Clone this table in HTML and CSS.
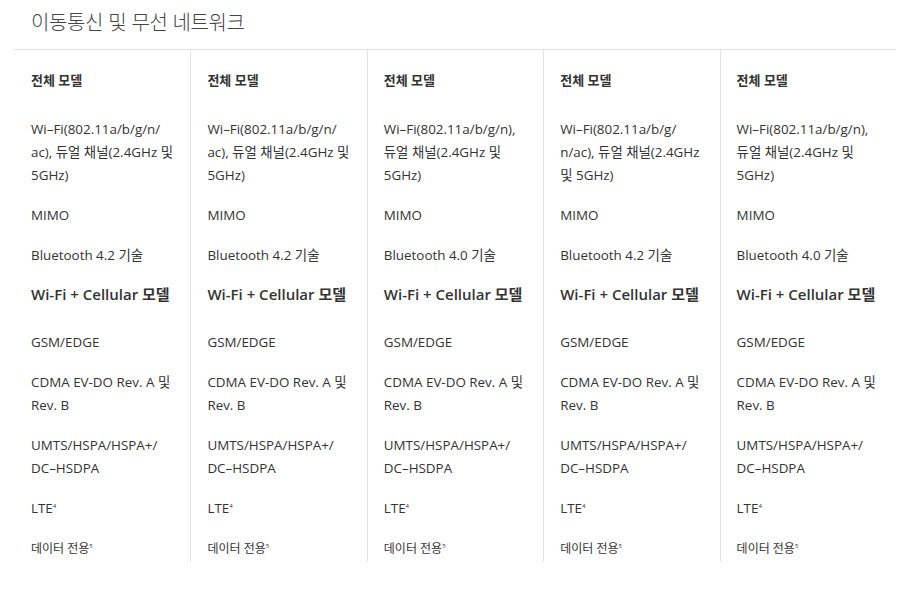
FILE: index.html
```html
<!DOCTYPE html>
<html lang="ko">
<head>
<meta charset="utf-8">
<title>이동통신 및 무선 네트워크</title>
<link rel="stylesheet" href="styles.css">
</head>
<body>
<section class="spec">
  <h2 class="spec-title">이동통신 및 무선 네트워크</h2>
  <div class="grid">
    <div class="col">
      <h3 class="model">전체 모델</h3>
      <p>Wi–Fi(802.11a/b/g/n/<br>ac), 듀얼 채널(2.4GHz 및<br>5GHz)</p>
      <p>MIMO</p>
      <p>Bluetooth 4.2 기술</p>
      <h4 class="cell">Wi-Fi + Cellular 모델</h4>
      <p>GSM/EDGE</p>
      <p>CDMA EV-DO Rev. A 및<br>Rev. B</p>
      <p>UMTS/HSPA/HSPA+/<br>DC–HSDPA</p>
      <p>LTE<sup>4</sup></p>
      <p class="small">데이터 전용<sup>5</sup></p>
    </div>
    <div class="col">
      <h3 class="model">전체 모델</h3>
      <p>Wi–Fi(802.11a/b/g/n/<br>ac), 듀얼 채널(2.4GHz 및<br>5GHz)</p>
      <p>MIMO</p>
      <p>Bluetooth 4.2 기술</p>
      <h4 class="cell">Wi-Fi + Cellular 모델</h4>
      <p>GSM/EDGE</p>
      <p>CDMA EV-DO Rev. A 및<br>Rev. B</p>
      <p>UMTS/HSPA/HSPA+/<br>DC–HSDPA</p>
      <p>LTE<sup>4</sup></p>
      <p class="small">데이터 전용<sup>5</sup></p>
    </div>
    <div class="col">
      <h3 class="model">전체 모델</h3>
      <p>Wi–Fi(802.11a/b/g/n),<br>듀얼 채널(2.4GHz 및<br>5GHz)</p>
      <p>MIMO</p>
      <p>Bluetooth 4.0 기술</p>
      <h4 class="cell">Wi-Fi + Cellular 모델</h4>
      <p>GSM/EDGE</p>
      <p>CDMA EV-DO Rev. A 및<br>Rev. B</p>
      <p>UMTS/HSPA/HSPA+/<br>DC–HSDPA</p>
      <p>LTE<sup>4</sup></p>
      <p class="small">데이터 전용<sup>5</sup></p>
    </div>
    <div class="col">
      <h3 class="model">전체 모델</h3>
      <p>Wi–Fi(802.11a/b/g/<br>n/ac), 듀얼 채널(2.4GHz<br>및 5GHz)</p>
      <p>MIMO</p>
      <p>Bluetooth 4.2 기술</p>
      <h4 class="cell">Wi-Fi + Cellular 모델</h4>
      <p>GSM/EDGE</p>
      <p>CDMA EV-DO Rev. A 및<br>Rev. B</p>
      <p>UMTS/HSPA/HSPA+/<br>DC–HSDPA</p>
      <p>LTE<sup>4</sup></p>
      <p class="small">데이터 전용<sup>5</sup></p>
    </div>
    <div class="col">
      <h3 class="model">전체 모델</h3>
      <p>Wi–Fi(802.11a/b/g/n),<br>듀얼 채널(2.4GHz 및<br>5GHz)</p>
      <p>MIMO</p>
      <p>Bluetooth 4.0 기술</p>
      <h4 class="cell">Wi-Fi + Cellular 모델</h4>
      <p>GSM/EDGE</p>
      <p>CDMA EV-DO Rev. A 및<br>Rev. B</p>
      <p>UMTS/HSPA/HSPA+/<br>DC–HSDPA</p>
      <p>LTE<sup>4</sup></p>
      <p class="small">데이터 전용<sup>5</sup></p>
    </div>
  </div>
</section>
</body>
</html>
```
FILE: styles.css
```css
html, body {
  margin: 0;
  padding: 0;
  background: #fff;
}
body {
  font-family: "Open Sans", "Noto Sans CJK KR", sans-serif;
  color: #333;
}
.spec {
  padding: 0 4px 0 14px;
}
.spec-title {
  margin: 0;
  padding: 7px 0 0 17px;
  height: 49px;
  box-sizing: border-box;
  font-family: "Noto Sans CJK KR", sans-serif;
  font-size: 20px;
  line-height: 30px;
  font-weight: 300;
  color: #444;
  letter-spacing: -0.4px;
}
.grid {
  display: grid;
  grid-template-columns: repeat(5, 1fr);
  border-top: 1px solid #e3e3e3;
}
.col {
  padding: 20px 0 2px 16px;
  border-left: 1px solid #e3e3e3;
  white-space: nowrap;
}
.col:first-child {
  border-left: none;
  padding-left: 17px;
}
.model {
  margin: 0 0 28px;
  font-size: 13px;
  line-height: 20px;
  font-weight: 700;
}
.col p {
  margin: 0 0 17px;
  font-size: 13.4px;
  line-height: 23px;
}
.col p.small {
  font-size: 12px;
  margin-bottom: 0;
}
.cell {
  margin: -1px 0 25px;
  font-size: 15px;
  line-height: 23px;
  font-weight: 600;
}
sup {
  font-size: 6px;
  vertical-align: 5px;
  line-height: 0;
}
```
